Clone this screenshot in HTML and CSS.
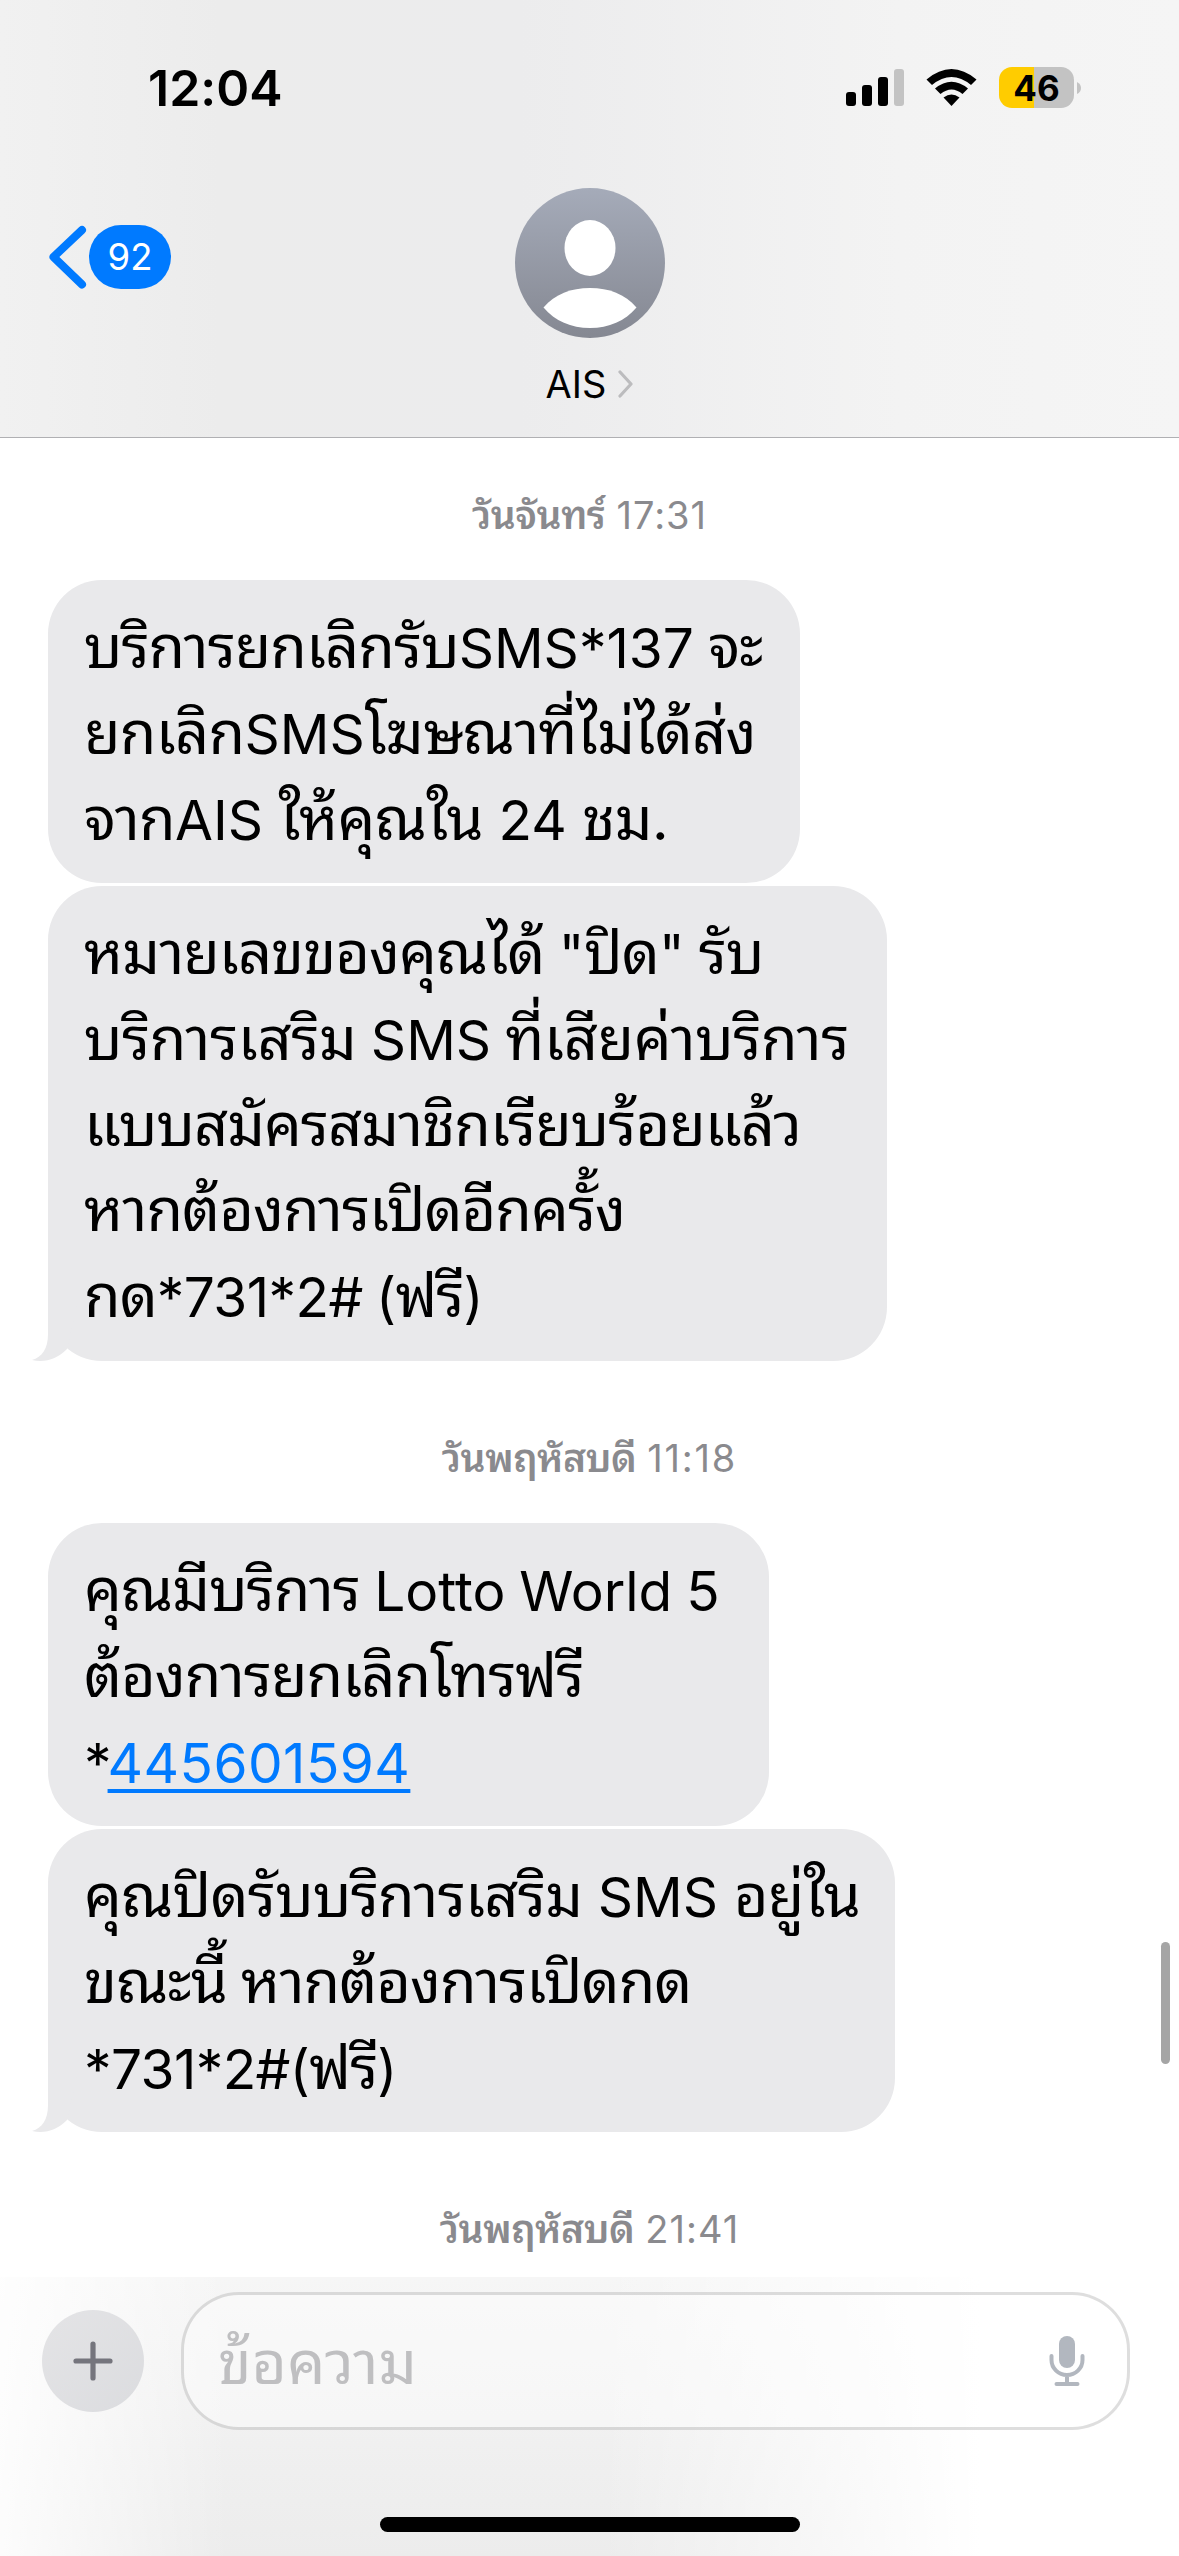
FILE: index.html
```html
<!DOCTYPE html>
<html lang="th">
<head>
<meta charset="utf-8">
<title>AIS</title>
<link rel="stylesheet" href="styles.css">
</head>
<body>
<div class="phone">
  <header class="header">
    <div class="status">
      <span class="clock">12:04</span>
      <div class="indicators">
        <svg class="signal" width="58" height="38" viewBox="0 0 58 38">
          <rect x="0" y="23" width="10" height="14" rx="3"/>
          <rect x="16" y="16" width="10" height="21" rx="3"/>
          <rect x="32" y="8" width="10" height="29" rx="3"/>
          <rect x="48" y="0" width="10" height="37" rx="3" fill="#c3c3c3"/>
        </svg>
        <svg class="wifi" width="51" height="38" viewBox="0 0 51 38">
          <path d="M0.500 10.500 Q25.500 -10.500 50.500 10.500 L45 16 Q25.500 0 6 16 Z"/>
          <path d="M9 19.500 Q25.500 6 42 19.500 L36.500 25 Q25.500 16 14.500 25 Z"/>
          <path d="M17.500 28.500 Q25.500 22.500 33.500 28.500 L25.500 37 Z"/>
        </svg>
        <div class="battery"><span class="battery-body">46</span>
          <svg width="4" height="12" viewBox="0 0 4 12"><path d="M0 0 Q4 2 4 6 Q4 10 0 12Z" fill="#c3c3c3"/></svg>
        </div>
      </div>
    </div>
    <div class="nav">
      <div class="back">
        <svg width="38" height="64" viewBox="0 0 38 64"><path d="M33 5 L4.500 32 L33 59.500" fill="none" stroke="#007aff" stroke-width="8" stroke-linecap="round" stroke-linejoin="round"/></svg>
        <span class="badge">92</span>
      </div>
      <div class="contact">
        <svg class="avatar" width="150" height="150" viewBox="0 0 150 150">
          <defs><linearGradient id="g" x1="0" y1="0" x2="0" y2="1"><stop offset="0" stop-color="#a5abb9"/><stop offset="1" stop-color="#858892"/></linearGradient></defs>
          <circle cx="75" cy="75" r="75" fill="url(#g)"/>
          <ellipse cx="75" cy="60" rx="25.500" ry="28" fill="#fff"/>
          <path d="M28.500 119.500 C40 106 56 100 75 100 C94 100 110 106 121.500 119.500 C110 133 94 140 75 140 C56 140 40 133 28.500 119.500Z" fill="#fff"/>
        </svg>
        <div class="name"><span>AIS</span>
          <svg width="15" height="28" viewBox="0 0 15 28"><path d="M2 2 L13 14 L2 26" fill="none" stroke="#bcbcbe" stroke-width="3.200" stroke-linecap="round" stroke-linejoin="round"/></svg>
        </div>
      </div>
    </div>
  </header>

  <main class="thread">
    <div class="stamp"><b>วันจันทร์</b><span class="t1">17:31</span></div>
    <div class="bubble b1">
      <p class="tight">บริการยกเลิกรับ<span>SMS*137</span> จะ</p>
      <p>ยกเลิก<span>SMS</span>โฆษณาที่ไม่ได้ส่ง</p>
      <p>จาก<span>AIS</span> ให้คุณใน <span>24</span> ชม.</p>
    </div>
    <div class="bubble b2">
      <p class="tight">หมายเลขของคุณได้ <span>"</span>ปิด<span>"</span> รับ</p>
      <p class="loose">บริการเสริม <span>SMS</span> ที่เสียค่าบริการ</p>
      <p class="tight">แบบสมัครสมาชิกเรียบร้อยแล้ว</p>
      <p class="tight">หากต้องการเปิดอีกครั้ง</p>
      <p class="tight">กด<span class="code">*731*2# (</span>ฟรี<span>)</span></p>
      <svg class="tail" width="46" height="60" viewBox="-16 -60 46 60"><path d="M0 -60V-27C0 -12 -6 -4 -16 -1C-3 2 9 -2 19 -12L30 -60Z"/></svg>
    </div>
    <div class="stamp spaced"><b>วันพฤหัสบดี</b><span class="t2">11:18</span></div>
    <div class="bubble b3">
      <p class="tight">คุณมีบริการ <span class="brand">Lotto World 5</span></p>
      <p class="tight">ต้องการยกเลิกโทรฟรี</p>
      <p><span>*<a class="tel">445601594</a></span></p>
    </div>
    <div class="bubble b4">
      <p>คุณปิดรับบริการเสริม <span>SMS</span> อยู่ใน</p>
      <p class="tight">ขณะนี้ หากต้องการเปิดกด</p>
      <p class="tight"><span class="code">*731*2#(</span>ฟรี<span>)</span></p>
      <svg class="tail" width="46" height="60" viewBox="-16 -60 46 60"><path d="M0 -60V-27C0 -12 -6 -4 -16 -1C-3 2 9 -2 19 -12L30 -60Z"/></svg>
    </div>
    <div class="stamp spaced"><b>วันพฤหัสบดี</b><span class="t3">21:41</span></div>
    <i class="scrollbar"></i>
  </main>

  <footer class="footer">
    <div class="composer">
      <div class="plus"><svg width="40" height="40" viewBox="0 0 40 40"><path d="M20 3V37M3 20H37" stroke="#75757d" stroke-width="5.200" stroke-linecap="round"/></svg></div>
      <div class="field"><span class="placeholder">ข้อความ</span>
        <svg width="36" height="50" viewBox="0 0 36 50" fill="none" stroke="#b2b7bf"><rect x="10" y="0" width="16" height="32" rx="8" fill="#b2b7bf" stroke="none"/><path d="M2.500 20V24a15.500 15 0 0 0 31 0V20M18 40V47M7.500 48H28.500" stroke-width="4" stroke-linecap="round"/></svg>
      </div>
    </div>
    <div class="home"></div>
  </footer>
</div>
</body>
</html>
```
FILE: styles.css
```css
* { box-sizing: border-box; }
body { margin: 0; background: #fff; font-family: Inter, "Noto Sans Thai Looped", Loma, "Noto Sans Thai", "Noto Sans", sans-serif; font-feature-settings: "calt" 0; color: #000; }
p { margin: 0; }
.phone { width: 1179px; height: 2556px; overflow: hidden; display: flex; flex-direction: column; }
.header { height: 438px; flex: none; border-bottom: 1px solid #b0b0b3; background: linear-gradient(90deg, #f1f1f1 0, #ececec 220px, #ececed 520px, #f3f3f3 900px, #f5f5f5 100%); }
.status { height: 188px; padding: 66px 98px 0 148px; display: flex; justify-content: space-between; align-items: flex-start; }
.clock { font-size: 50px; line-height: 44px; font-weight: 600; }
.indicators { display: flex; padding-top: 1px; }
.signal { margin-top: 2px; }
.wifi { margin: 2px 22px 0 22px; }
.battery { display: flex; align-items: center; gap: 3px; }
.battery-body { width: 75px; height: 41px; border-radius: 13px; background: linear-gradient(90deg, #ffcc00 35px, #c3c3c3 35px); font-size: 35px; line-height: 42px; font-weight: 650; text-align: center; }
.nav { display: grid; grid-template-columns: 1fr 240px 1fr; }
.back { display: flex; gap: 2px; padding: 37px 0 0 49px; }
.badge { width: 82px; height: 64px; border-radius: 32px; background: #007aff; color: #fff; font-size: 36.500px; line-height: 64px; text-align: center; }
.contact { display: flex; flex-direction: column; align-items: center; }
.avatar { display: block; }
.name { margin-top: 24px; display: flex; align-items: center; gap: 12px; font-size: 38px; line-height: 44px; }
.thread { flex: none; height: 1839px; position: relative; display: flex; flex-direction: column; align-items: flex-start; }
.stamp { flex: none; width: 100%; height: 142px; padding-top: 53px; display: flex; justify-content: center; align-items: baseline; gap: 11px; font-size: 38px; line-height: 48px; color: #8a8a8e; overflow: hidden; }
.stamp b { font-weight: 600; font-size: 39px; letter-spacing: -0.500px; }
.spaced { margin-top: 17px; }
.t1 { letter-spacing: 1px; }
.t2 { letter-spacing: 1.800px; }
.t3 { letter-spacing: 1px; }
.bubble { flex: none; margin: 0 0 3px 48px; padding: 24px 36px 22px; border-radius: 54px; background: #e9e9eb; font-size: 59.500px; line-height: 85.800px; white-space: nowrap; position: relative; }
.bubble p { height: 85.800px; letter-spacing: -0.700px; word-spacing: -0.500px; }
.bubble p.tight { letter-spacing: -0.950px; word-spacing: -1.500px; }
.bubble p.loose { letter-spacing: -0.350px; word-spacing: -2px; }
.bubble span { font-size: 55px; line-height: 1; letter-spacing: 0; }
.bubble .code { letter-spacing: -0.600px; }
.bubble .brand { letter-spacing: 0; }
.b1 { width: 752px; height: 303px; }
.b2 { width: 839px; height: 475px; }
.b3 { width: 721px; height: 303px; }
.b4 { width: 847px; height: 303px; }
.tail { position: absolute; left: -16px; bottom: 0; fill: #e9e9eb; }
.tel { margin-left: -4px; letter-spacing: 0.450px; color: #007aff; text-decoration: underline; text-decoration-thickness: 4px; text-underline-offset: 6px; text-decoration-skip-ink: none; }
.scrollbar { position: absolute; left: 1161px; top: 1504px; width: 9px; height: 122px; border-radius: 5px; background: #a5a5a5; }
.footer { flex: 1; background: linear-gradient(90deg, rgba(255,255,255,0.850) 0, rgba(255,255,255,0) 230px, rgba(255,255,255,0) 600px, #fff 980px), linear-gradient(180deg, #f6f6f6, #ececec); display: flex; flex-direction: column; justify-content: space-between; padding: 15px 49px 24px 42px; }
.composer { width: 100%; display: flex; align-items: center; gap: 37px; }
.plus { width: 102px; height: 102px; border-radius: 50%; background: linear-gradient(135deg, #e4e4e6, #dbdcdf); display: flex; align-items: center; justify-content: center; }
.field { flex: 1; height: 138px; border: 3px solid rgba(0,0,0,0.130); background: rgba(255,255,255,0.400); border-radius: 58px; padding: 0 42px 0 34px; display: flex; align-items: center; justify-content: space-between; }
.placeholder { font-size: 60.500px; line-height: 80px; color: #bfbfc1; padding-top: 2px; }
.home { width: 420px; height: 15px; border-radius: 8px; background: #000; margin-left: 338px; }
```
